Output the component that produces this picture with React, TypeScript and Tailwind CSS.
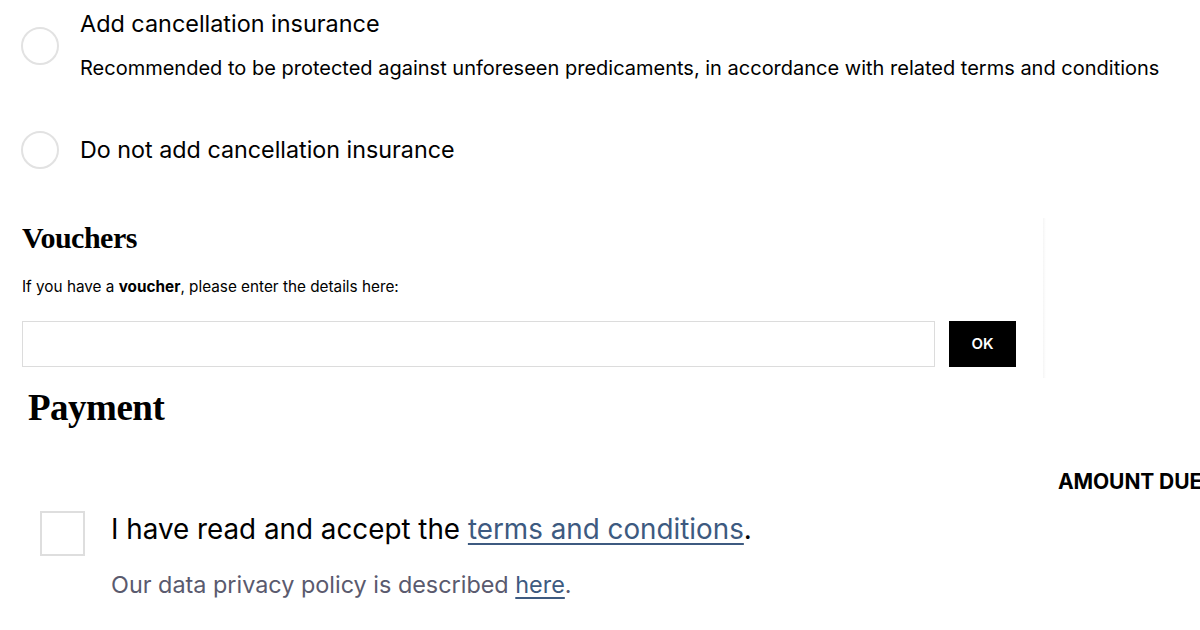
import React from "react";

export default function App() {
  const sans = "font-['Inter',_'Liberation_Sans',_sans-serif]";
  const serif = "font-['Liberation_Serif',_serif]";
  return (
    <div className={`relative w-[1200px] h-[630px] overflow-hidden bg-white text-black ${sans}`}>
      {/* Insurance options */}
      <div className="flex flex-col pl-[21px] pt-[10px]">
        <div className="flex gap-[21px]">
          <div className="mt-[17px] w-[38px] h-[38px] rounded-full border-2 border-[#e2e2e2] shrink-0" />
          <div className="flex flex-col">
            <div className="text-[23.4px] leading-[28px]">Add cancellation insurance</div>
            <div className="mt-[17px] text-[20px] leading-[26px] whitespace-nowrap">
              Recommended to be protected against unforeseen predicaments, in accordance with related terms and conditions
            </div>
          </div>
        </div>
        <div className="flex items-center gap-[21px] mt-[50px]">
          <div className="w-[38px] h-[38px] rounded-full border-2 border-[#e2e2e2] shrink-0" />
          <div className="text-[23.3px] leading-[28px]">Do not add cancellation insurance</div>
        </div>
      </div>

      {/* Vouchers */}
      <div className="flex items-start mt-[52px]">
        <div className="flex flex-col pl-[22px] w-[1020px]">
          <div className={`${serif} font-bold text-[30px] leading-[34px] tracking-[-0.5px]`}>Vouchers</div>
          <div className="mt-[22px] text-[15.3px] leading-[20px]">
            If you have a <span className="font-bold">voucher</span>, please enter the details here:
          </div>
          <div className="flex mt-[24px] gap-[14px]">
            <div className="w-[913px] h-[46px] border border-[#dcdcdc]" />
            <div className="w-[67px] h-[46px] bg-black text-white flex items-center justify-center text-[15px] font-semibold">OK</div>
          </div>
        </div>
        <div className="-mt-[3px] ml-[23px] w-[3px] h-[160px] bg-gradient-to-r from-[#f5f5f5] to-white" />
      </div>

      {/* Payment */}
      <div className={`${serif} font-bold text-[37px] leading-[44px] pl-[28px] mt-[8px] tracking-[-0.5px]`}>Payment</div>

      <div className="flex justify-end mt-[40px]">
        <div className="w-[142px] text-[21px] leading-[24px] font-bold tracking-[-0.1px] whitespace-nowrap overflow-hidden">AMOUNT DUE</div>
      </div>

      <div className="flex gap-[26px] pl-[40px] mt-[17px]">
        <div className="w-[45px] h-[45px] border-2 border-[#dedede] shrink-0" />
        <div className="flex flex-col pt-[1px]">
          <div className="text-[27.8px] leading-[34px]">
            I have read and accept the{" "}
            <span className="text-[#3d5a80] underline underline-offset-[4px] decoration-[2px]">terms and conditions</span>.
          </div>
          <div className="mt-[24px] text-[23.4px] leading-[30px] text-[#5a5a6e]">
            Our data privacy policy is described{" "}
            <span className="text-[#3d5a80] underline underline-offset-[4px] decoration-[2px]">here</span>.
          </div>
        </div>
      </div>
    </div>
  );
}
